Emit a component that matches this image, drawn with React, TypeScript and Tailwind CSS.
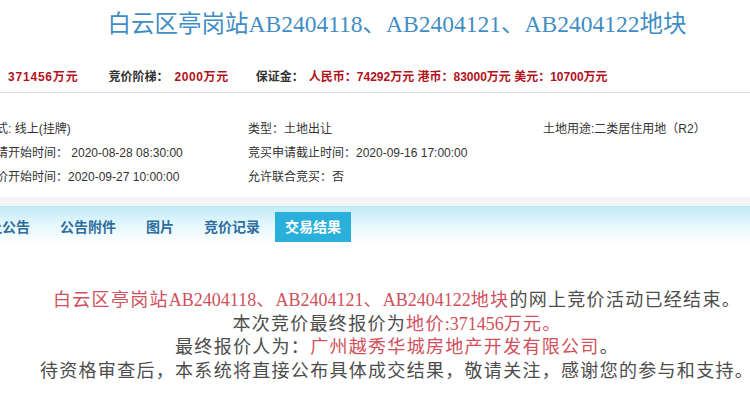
import React from 'react';

const sans = { fontFamily: '"Liberation Sans", "Noto Sans CJK SC", sans-serif' };
const serif = { fontFamily: '"Liberation Serif", "Noto Sans CJK SC", serif' };

const tabs = ['出让公告', '公告附件', '图片', '竞价记录'];

const App = () => {
  return (
    <div className="w-full h-[400px] overflow-hidden bg-white" style={sans}>
      <div className="w-[794px]">
        {/* title */}
        <div className="h-[48px] flex items-center justify-center">
          <h1 className="text-[23.5px] leading-[28px] font-normal text-[#3f8dc4]" style={serif}>
            白云区亭岗站AB2404118、AB2404121、AB2404122地块
          </h1>
        </div>

        {/* price row */}
        <div className="h-[45px] border-b border-[#dedede] pt-[21px] text-[12px] leading-[16px] font-bold w-[750px] whitespace-nowrap">
          <span className="ml-[8px] text-[#b3121c] tracking-[0.8px]">371456万元</span>
          <span className="ml-[30px] text-[#333]">竞价阶梯：</span>
          <span className="ml-[6px] text-[#b3121c] tracking-[0.6px]">2000万元</span>
          <span className="ml-[27px] text-[#333]">保证金：</span>
          <span className="ml-[5px] text-[#b3121c]">人民币：74292万元 港币：83000万元 美元：10700万元</span>
        </div>

        {/* info grid */}
        <div className="pt-[24px] pb-[8px] w-[750px] text-[12px] leading-[24px] text-[#333] whitespace-nowrap">
          <div className="grid grid-cols-[248px_295px_1fr]">
            <div className="ml-[-40px]">交易方式: 线上(挂牌)</div>
            <div>类型：土地出让</div>
            <div>土地用途:二类居住用地（R2）</div>
            <div className="ml-[-40px]">竞买申请开始时间：&nbsp;2020-08-28 08:30:00</div>
            <div>竞买申请截止时间：2020-09-16 17:00:00</div>
            <div />
            <div className="ml-[-40px]">网上竞价开始时间：2020-09-27 10:00:00</div>
            <div>允许联合竞买：否</div>
            <div />
          </div>
        </div>
        <div className="h-[9px] w-[750px] bg-[#f6f4f3]" />

        {/* tabs */}
        <div className="h-[38px] w-[750px] border-t border-[#b9e6f2] bg-gradient-to-b from-[#c2ebf8] via-[#e6f8fd] to-white pt-[5px]">
          <div className="flex items-center h-[30px] text-[14px] font-bold whitespace-nowrap">
            <div className="ml-[-41px] flex">
              {tabs.map((t) => (
                <span key={t} className="px-[15px] leading-[30px] text-[#2e6e9e]">
                  {t}
                </span>
              ))}
            </div>
            <span className="px-[10px] leading-[30px] bg-[#2bb0dc] text-white">交易结果</span>
          </div>
        </div>

        {/* result message */}
        <div className="pt-[45px] text-center text-[18px] leading-[23.5px] tracking-[1.3px] text-[#4d4d4d] whitespace-nowrap" style={serif}>
          <p>
            <span className="text-[#d0505c]">
              白云区亭岗站<span className="tracking-normal">AB2404118</span>、
              <span className="tracking-normal">AB2404121</span>、
              <span className="tracking-normal">AB2404122</span>地块
            </span>
            的网上竞价活动已经结束。
          </p>
          <p>
            本次竞价最终报价为
            <span className="text-[#d0505c]">
              地价<span className="tracking-normal">:371456</span>万元。
            </span>
          </p>
          <p>
            最终报价人为：<span className="text-[#d0505c]">广州越秀华城房地产开发有限公司</span>。
          </p>
          <p>待资格审查后，本系统将直接公布具体成交结果，敬请关注，感谢您的参与和支持。</p>
        </div>
      </div>
    </div>
  );
};

export default App;
